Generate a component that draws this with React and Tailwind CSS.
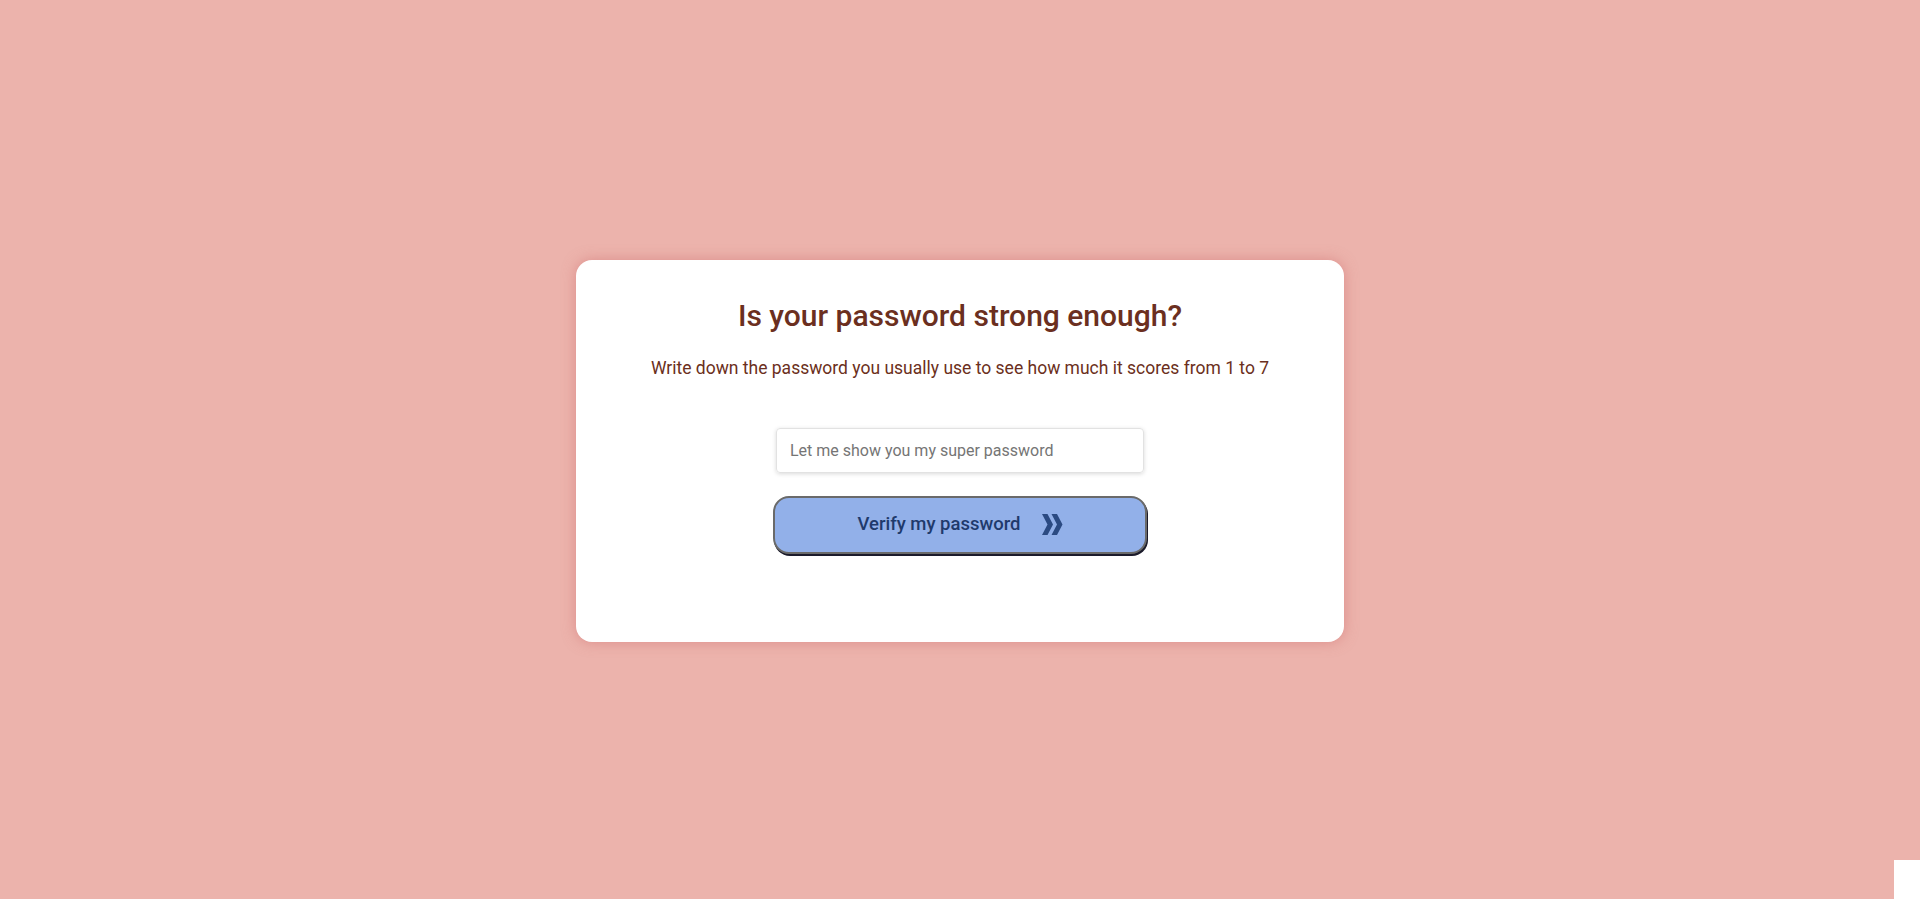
export default function App() {
  return (
    <div className="relative min-h-screen w-full bg-[#ecb3ac] flex items-center justify-center pt-[2px] font-['Roboto',sans-serif]">
      <div className="w-[768px] h-[382px] bg-white rounded-2xl shadow-[0_0_14px_rgba(205,110,110,0.55)] flex flex-col items-center pt-[38px]">
        <h1 className="text-[30px] leading-9 font-medium text-[#6b2f20]">Is your password strong enough?</h1>
        <p className="mt-5 text-[17.5px] leading-7 text-[#6b2f20]">
          Write down the password you usually use to see how much it scores from 1 to 7
        </p>
        <input
          type="text"
          placeholder="Let me show you my super password"
          className="mt-[46px] w-[368px] h-[45px] px-[13px] rounded border border-[#e2e2e2] shadow-[0_1px_4px_rgba(0,0,0,0.15)] text-base text-[#333] placeholder:text-[#757575] outline-none"
        />
        <button className="mt-[23px] w-[374px] h-[58px] rounded-2xl bg-[#92b0e9] border-2 border-[#6a6a6a] shadow-[1px_2px_0_#1b1b2b] flex items-center justify-center gap-[21px] text-[#1f3a6c]">
          <span className="text-[18.5px] font-medium">Verify my password</span>
          <svg width="21" height="21" viewBox="0 0 21 21" className="text-[#2b4a82]" fill="currentColor">
            <polygon points="0,0 5.5,0 11,10.5 5.5,21 0,21 5.5,10.5" />
            <polygon points="9.5,0 15,0 20.5,10.5 15,21 9.5,21 15,10.5" />
          </svg>
        </button>
      </div>
      <div className="absolute right-0 bottom-0 w-[26px] h-[39px] bg-white" />
    </div>
  );
}
